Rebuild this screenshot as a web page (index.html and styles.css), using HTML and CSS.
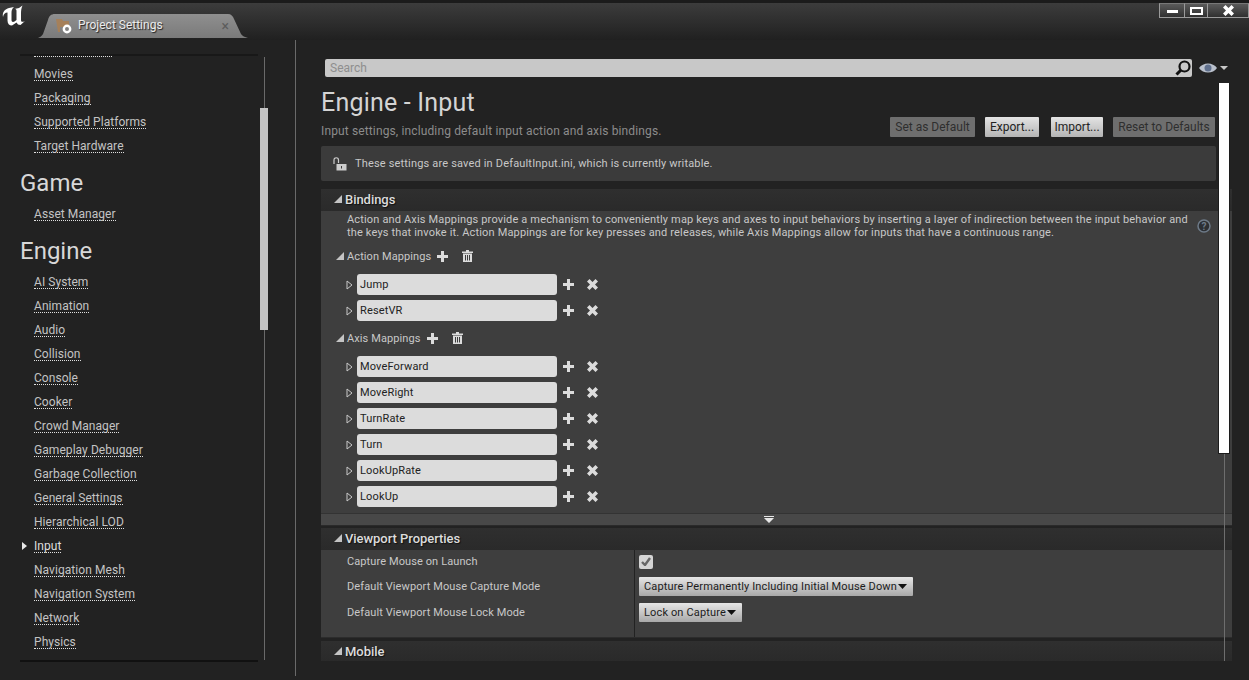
FILE: index.html
```html
<!DOCTYPE html>
<html lang="en">

<head>
    <meta charset="UTF-8">
    <title>Project Settings</title>
    <link rel="stylesheet" href="styles.css">
</head>

<body>
    <svg class="sprites" width="0" height="0">
        <symbol id="open" viewBox="0 0 8 8"><path d="M8 0V8H0Z" fill="#c4c4c4" /></symbol>
        <symbol id="closed" viewBox="0 0 7 10"><path d="M1 1L6 5L1 9Z" fill="none" stroke="#c8c8c8" /></symbol>
        <symbol id="plus" viewBox="0 0 11 11"><path d="M4 0H7V4H11V7H7V11H4V7H0V4H4Z" fill="#dcdcdc" /></symbol>
        <symbol id="cross" viewBox="0 0 11 11"><path d="M2.500 0L5.500 3L8.500 0L11 2.500L8 5.500L11 8.500L8.500 11L5.500 8L2.500 11L0 8.500L3 5.500L0 2.500Z" fill="currentColor" /></symbol>
        <symbol id="trash" viewBox="0 0 11 12"><path d="M0 1.500H4V0H7V1.500H11V3H0ZM1 3.500H10V12H1ZM3 5V10.500H4V5ZM5 5V10.500H6V5ZM7 5V10.500H8V5Z" fill="#dcdcdc" fill-rule="evenodd" /></symbol>
        <symbol id="caret" viewBox="0 0 9 5"><path d="M0 0H9L4.500 5Z" fill="#111" /></symbol>
    </svg>

    <div class="titlebar">
        <svg class="logo" width="26" height="28" viewBox="0 0 26 28">
            <path d="M3 17C2 12 5 9 9 8L14 7C12 9 11.500 10 11.500 13L11.500 20C11.500 22 13 22.500 14.500 21.500L16.500 20L16.500 11C16.500 9.500 16 9 14.500 9L19 8L22.500 5.500C21.500 8 21 10 21 13L21 20C21 22 22.500 22.500 25 21L20.500 25L18 24.500L16.500 22.500L12 25.500C9 25.500 7.500 23.500 7.500 20.500L7.500 12.500C5 12.500 3.500 14 3 17Z" fill="#fff" />
        </svg>
        <div class="tab">
            <svg class="tab-icon" width="17" height="16" viewBox="0 0 17 16">
                <path d="M0 1H6L7 3H13V9H4V14H2Z" fill="#a5805a" />
                <circle cx="11" cy="11" r="3.200" fill="none" stroke="#fff" stroke-width="2.400" />
            </svg>
            <span class="tab-title">Project Settings</span>
            <span class="tab-close">×</span>
        </div>
        <div class="window-btns">
            <div class="window-btn min"><i></i></div>
            <div class="window-btn max"><i></i></div>
            <div class="window-btn close">
                <svg width="11" height="11"><use href="#cross" /></svg>
            </div>
        </div>
    </div>

    <div class="main">
        <div class="sidebar">
            <div class="side-scroll">
                <div class="side-list">
                    <div class="side-item cut"><span></span></div>
                    <div class="side-item"><span>Movies</span></div>
                    <div class="side-item"><span>Packaging</span></div>
                    <div class="side-item"><span>Supported Platforms</span></div>
                    <div class="side-item"><span>Target Hardware</span></div>
                    <div class="side-head">Game</div>
                    <div class="side-item"><span>Asset Manager</span></div>
                    <div class="side-head">Engine</div>
                    <div class="side-item"><span>AI System</span></div>
                    <div class="side-item"><span>Animation</span></div>
                    <div class="side-item"><span>Audio</span></div>
                    <div class="side-item"><span>Collision</span></div>
                    <div class="side-item"><span>Console</span></div>
                    <div class="side-item"><span>Cooker</span></div>
                    <div class="side-item"><span>Crowd Manager</span></div>
                    <div class="side-item"><span>Gameplay Debugger</span></div>
                    <div class="side-item"><span>Garbage Collection</span></div>
                    <div class="side-item"><span>General Settings</span></div>
                    <div class="side-item"><span>Hierarchical LOD</span></div>
                    <div class="side-item active"><span>Input</span></div>
                    <div class="side-item"><span>Navigation Mesh</span></div>
                    <div class="side-item"><span>Navigation System</span></div>
                    <div class="side-item"><span>Network</span></div>
                    <div class="side-item"><span>Physics</span></div>
                </div>
            </div>
            <div class="side-track"><div class="side-thumb"></div></div>
        </div>

        <div class="content">
            <div class="search-row">
                <div class="search">
                    <span>Search</span>
                    <svg width="18" height="18" viewBox="0 0 18 18">
                        <circle cx="10.500" cy="7.500" r="5" fill="none" stroke="#111" stroke-width="2.200" />
                        <path d="M7 11L2.500 15.500" stroke="#111" stroke-width="3" />
                    </svg>
                </div>
                <svg class="eye" width="18" height="12" viewBox="0 0 18 12">
                    <path d="M0 6C4 0 14 0 18 6C14 12 4 12 0 6Z" fill="#b9c0cc" />
                    <circle cx="9" cy="6" r="3.500" fill="#5f6f8c" />
                </svg>
                <i class="eye-caret"></i>
            </div>

            <h1 class="page-title">Engine - Input</h1>
            <div class="page-actions">
                <p class="page-sub">Input settings, including default input action and axis bindings.</p>
                <button class="btn off btn-default">Set as Default</button>
                <button class="btn btn-export">Export...</button>
                <button class="btn btn-import">Import...</button>
                <button class="btn off btn-reset">Reset to Defaults</button>
            </div>

            <div class="notice">
                <svg width="14" height="14" viewBox="0 0 14 14">
                    <path d="M1 7V3C1 0 5.500 0 5.500 3V6" fill="none" stroke="#ccc" stroke-width="1.200" />
                    <path d="M3.500 7H13.500V13.500H3.500ZM8 9V11.500H9V9Z" fill="#ccc" fill-rule="evenodd" />
                </svg>
                <span>These settings are saved in DefaultInput.ini, which is currently writable.</span>
            </div>

            <div class="panel">
                <div class="sec-head"><svg width="8" height="8"><use href="#open" /></svg>Bindings</div>
                <div class="sec-body bindings">
                    <div class="desc">
                        <p>Action and Axis Mappings provide a mechanism to conveniently map keys and axes to input behaviors by inserting a layer of indirection between the input behavior and the keys that invoke it. Action Mappings are for key presses and releases, while Axis Mappings allow for inputs that have a continuous range.</p>
                        <svg class="help" width="14" height="14" viewBox="0 0 14 14">
                            <circle cx="7" cy="7" r="6" fill="#2c2f33" stroke="#6d7a88" stroke-width="1.500" />
                            <text x="7" y="10.500" text-anchor="middle" class="help-mark">?</text>
                        </svg>
                    </div>

                    <div class="map-head first">
                        <svg width="8" height="8"><use href="#open" /></svg>
                        <span>Action Mappings</span>
                        <svg class="ic-plus" width="11" height="11"><use href="#plus" /></svg>
                        <svg class="ic-trash" width="11" height="12"><use href="#trash" /></svg>
                    </div>
                    <div class="map-row">
                        <svg width="7" height="10"><use href="#closed" /></svg>
                        <div class="field">Jump</div>
                        <svg class="ic-plus" width="11" height="11"><use href="#plus" /></svg>
                        <svg class="ic-cross" width="11" height="11"><use href="#cross" /></svg>
                    </div>
                    <div class="map-row">
                        <svg width="7" height="10"><use href="#closed" /></svg>
                        <div class="field">ResetVR</div>
                        <svg class="ic-plus" width="11" height="11"><use href="#plus" /></svg>
                        <svg class="ic-cross" width="11" height="11"><use href="#cross" /></svg>
                    </div>

                    <div class="map-head">
                        <svg width="8" height="8"><use href="#open" /></svg>
                        <span>Axis Mappings</span>
                        <svg class="ic-plus" width="11" height="11"><use href="#plus" /></svg>
                        <svg class="ic-trash" width="11" height="12"><use href="#trash" /></svg>
                    </div>
                    <div class="map-row">
                        <svg width="7" height="10"><use href="#closed" /></svg>
                        <div class="field">MoveForward</div>
                        <svg class="ic-plus" width="11" height="11"><use href="#plus" /></svg>
                        <svg class="ic-cross" width="11" height="11"><use href="#cross" /></svg>
                    </div>
                    <div class="map-row">
                        <svg width="7" height="10"><use href="#closed" /></svg>
                        <div class="field">MoveRight</div>
                        <svg class="ic-plus" width="11" height="11"><use href="#plus" /></svg>
                        <svg class="ic-cross" width="11" height="11"><use href="#cross" /></svg>
                    </div>
                    <div class="map-row">
                        <svg width="7" height="10"><use href="#closed" /></svg>
                        <div class="field">TurnRate</div>
                        <svg class="ic-plus" width="11" height="11"><use href="#plus" /></svg>
                        <svg class="ic-cross" width="11" height="11"><use href="#cross" /></svg>
                    </div>
                    <div class="map-row">
                        <svg width="7" height="10"><use href="#closed" /></svg>
                        <div class="field">Turn</div>
                        <svg class="ic-plus" width="11" height="11"><use href="#plus" /></svg>
                        <svg class="ic-cross" width="11" height="11"><use href="#cross" /></svg>
                    </div>
                    <div class="map-row">
                        <svg width="7" height="10"><use href="#closed" /></svg>
                        <div class="field">LookUpRate</div>
                        <svg class="ic-plus" width="11" height="11"><use href="#plus" /></svg>
                        <svg class="ic-cross" width="11" height="11"><use href="#cross" /></svg>
                    </div>
                    <div class="map-row">
                        <svg width="7" height="10"><use href="#closed" /></svg>
                        <div class="field">LookUp</div>
                        <svg class="ic-plus" width="11" height="11"><use href="#plus" /></svg>
                        <svg class="ic-cross" width="11" height="11"><use href="#cross" /></svg>
                    </div>
                </div>
                <div class="expander">
                    <svg width="10" height="8" viewBox="0 0 10 8"><path d="M0 0H10V1H0ZM0 2H10L5 7Z" fill="#e6e6e6" /></svg>
                </div>

                <div class="sec-head viewport"><svg width="8" height="8"><use href="#open" /></svg>Viewport Properties</div>
                <div class="sec-body props">
                    <div class="prop-labels">
                        <div class="prop short">Capture Mouse on Launch</div>
                        <div class="prop">Default Viewport Mouse Capture Mode</div>
                        <div class="prop">Default Viewport Mouse Lock Mode</div>
                    </div>
                    <div class="prop-values">
                        <div class="prop short">
                            <div class="check">
                                <svg width="10" height="9" viewBox="0 0 10 9"><path d="M1 5L4 8L9 1" fill="none" stroke="#666" stroke-width="2.400" /></svg>
                            </div>
                        </div>
                        <div class="prop">
                            <div class="combo">Capture Permanently Including Initial Mouse Down<svg width="9" height="5"><use href="#caret" /></svg></div>
                        </div>
                        <div class="prop">
                            <div class="combo">Lock on Capture<svg width="9" height="5"><use href="#caret" /></svg></div>
                        </div>
                    </div>
                </div>

                <div class="sec-head mobile"><svg width="8" height="8"><use href="#open" /></svg>Mobile</div>
            </div>

            <div class="content-track"><div class="content-thumb"></div></div>
        </div>
    </div>
</body>

</html>
```

FILE: styles.css
```css
* {
    box-sizing: border-box;
}

html,
body {
    margin: 0;
    height: 680px;
    overflow: hidden;
}

body {
    background: #222222;
    color: #c8c8c8;
    font-family: Roboto, "Liberation Sans", sans-serif;
    font-size: 12px;
}

p {
    margin: 0;
}

.sprites {
    position: absolute;
}

/* title bar */
.titlebar {
    display: flex;
    height: 40px;
    border-top: 3px solid #1b1b1b;
    background: linear-gradient(#3c3c3c, #202020);
}

.logo {
    margin-top: -3px;
    flex: none;
}

.tab {
    display: flex;
    align-items: center;
    flex: none;
    width: 210px;
    height: 24px;
    margin-top: 11px;
    margin-left: 12px;
    padding-left: 18px;
    background: linear-gradient(#8f8f8f, #7a7a7a);
    clip-path: path("M0 24C2 23 4 22 5 20L10 6C11 2 13 0 17 0H190C193 0 195 2 196 5L203 20C204 22 207 23 210 24Z");
}

.tab-title {
    margin-left: 5px;
    margin-top: -2px;
    color: #ececec;
    text-shadow: 1px 1px 1px #222;
}

.tab-close {
    margin-left: auto;
    margin-right: 19px;
    font-size: 14px;
    color: #5c5c5c;
}

.window-btns {
    display: flex;
    margin-left: auto;
    height: 15px;
}

.window-btn {
    display: flex;
    align-items: center;
    justify-content: center;
    height: 15px;
    border: 1px solid #9a9a9a;
    border-top-color: #777;
    background: linear-gradient(#5a5a5a, #303030);
}

.window-btn.min {
    width: 26px;
}

.window-btn.max {
    width: 23px;
    border-left: none;
}

.window-btn.close {
    width: 41px;
    border-left: none;
    color: #fff;
}

.min i {
    width: 11px;
    height: 3px;
    margin-top: 2px;
    background: #fff;
}

.max i {
    width: 13px;
    height: 8px;
    border: 2px solid #fff;
}

.close svg {
    display: block;
}

/* layout */
.main {
    display: flex;
    height: 636px;
}

/* left category list */
.sidebar {
    position: relative;
    flex: none;
    width: 296px;
    border-right: 1px solid #6a6a6a;
    padding-top: 14px;
}

.side-scroll {
    width: 238px;
    height: 608px;
    margin-left: 20px;
    overflow: hidden;
    border-top: 2px solid #181818;
    border-bottom: 2px solid #111;
}

.side-list {
    margin-top: -18px;
}

.side-item {
    position: relative;
    height: 24px;
    padding-left: 14px;
    font-size: 12px;
    letter-spacing: 0.06px;
    color: #c4c4c4;
}

.side-item span {
    display: inline-block;
    height: 16px;
    line-height: 19px;
    margin-top: 3px;
    border-bottom: 1px dotted #e0e0e0;
    vertical-align: top;
}

.side-item.cut span {
    width: 78px;
}

.side-item.active {
    color: #dedede;
}

.side-item.active::before {
    content: "";
    position: absolute;
    left: 2px;
    top: 8px;
    border-left: 5px solid #e8e8e8;
    border-top: 4px solid transparent;
    border-bottom: 4px solid transparent;
}

.side-head {
    height: 44px;
    line-height: 50px;
    font-size: 24px;
    color: #d8d8d8;
}

.side-track {
    position: absolute;
    left: 264px;
    top: 17px;
    bottom: 16px;
    width: 1px;
    background: #6a6a6a;
}

.side-thumb {
    position: absolute;
    left: -4px;
    top: 51px;
    width: 8px;
    height: 222px;
    background: #c4c4c4;
}

/* right settings pane */
.content {
    position: relative;
    flex: 1;
    min-width: 0;
    height: 621px;
    padding-left: 25px;
    overflow: hidden;
}

.search-row {
    display: flex;
    align-items: center;
    height: 18px;
    margin-top: 19px;
    margin-left: 4px;
}

.search {
    display: flex;
    align-items: center;
    justify-content: space-between;
    width: 867px;
    height: 18px;
    padding-left: 5px;
    background: #c8c8c8;
    border-radius: 2px;
    color: #8e8e8e;
}

.eye {
    margin-left: 7px;
}

.eye-caret {
    margin-left: 3px;
    border-top: 4px solid #c8c8c8;
    border-left: 4px solid transparent;
    border-right: 4px solid transparent;
}

.page-title {
    height: 30px;
    margin: 10px 0 0;
    font-size: 25px;
    font-weight: 400;
    letter-spacing: 0.2px;
    line-height: 32px;
    color: #d4d4d4;
}

.page-actions {
    display: flex;
    height: 20px;
    width: 894px;
}

.page-sub {
    width: 569px;
    padding-top: 6px;
    color: #8c8c8c;
    font-size: 12px;
    letter-spacing: 0.13px;
    line-height: 16px;
}

.btn {
    height: 20px;
    padding: 0;
    border: none;
    border-radius: 1px;
    background: linear-gradient(#e4e4e4, #b4b4b4);
    color: #222;
    font-family: inherit;
    font-size: 12px;
}

.btn.off {
    background: #6e6e6e;
    color: #2e2e2e;
}

.btn-default {
    width: 85px;
}

.btn-export {
    width: 54px;
    margin-left: 10px;
}

.btn-import {
    width: 52px;
    margin-left: 12px;
}

.btn-reset {
    width: 102px;
    margin-left: 10px;
}

.notice {
    display: flex;
    align-items: center;
    gap: 8px;
    width: 895px;
    height: 35px;
    margin-top: 9px;
    padding-left: 12px;
    background: #3b3b3b;
    border-radius: 2px;
    font-size: 11px;
    letter-spacing: 0.17px;
}

.panel {
    width: 911px;
    margin-top: 8px;
}

.sec-head {
    display: flex;
    align-items: center;
    gap: 3px;
    height: 22px;
    padding-left: 13px;
    padding-bottom: 2px;
    background: linear-gradient(#2f2f2f, #2a2a2a);
    font-size: 13px;
    font-weight: 500;
    letter-spacing: -0.05px;
    color: #dcdcdc;
    text-shadow: 1px 1px 1px #111;
}

.sec-head.viewport {
    margin-top: 2px;
}

.sec-head.mobile {
    height: 20px;
    margin-top: 3px;
    padding-bottom: 0;
}

.sec-body {
    background: #3e3e3e;
}

.bindings {
    padding: 2px 0 1px;
}

.desc {
    display: flex;
    justify-content: space-between;
    align-items: center;
    padding-left: 26px;
    padding-right: 21px;
    font-size: 11px;
    line-height: 13px;
    letter-spacing: 0.16px;
}

.desc p {
    width: 848px;
}

.help-mark {
    font-size: 10px;
    font-weight: 700;
    fill: #6d7a88;
}

.map-head {
    display: flex;
    align-items: center;
    height: 18px;
    margin-top: 8px;
    padding-left: 15px;
    font-size: 11px;
    letter-spacing: 0.1px;
}

.map-head span {
    margin-left: 3px;
}

.map-head .ic-plus {
    margin-left: 6px;
}

.map-head .ic-trash {
    margin-left: 14px;
}

.map-row {
    display: flex;
    align-items: center;
    height: 21px;
    margin-bottom: 5px;
    padding-left: 25px;
    color: #dcdcdc;
}

.map-head + .map-row {
    margin-top: 9px;
}

.field {
    width: 200px;
    height: 21px;
    margin-left: 4px;
    padding-left: 3px;
    border-radius: 3px;
    background: #dcdcdc;
    color: #222;
    font-size: 11px;
    line-height: 21px;
    letter-spacing: 0.15px;
}

.map-row .ic-plus {
    margin-left: 6px;
    margin-top: -1px;
}

.map-row .ic-cross {
    margin-left: 13px;
    margin-top: -1px;
}

.expander {
    display: flex;
    justify-content: center;
    align-items: center;
    height: 13px;
    padding-right: 15px;
    background: #484848;
    border-top: 1px solid #333;
    border-bottom: 1px solid #2a2a2a;
}

.props {
    display: flex;
    height: 88px;
    border-bottom: 1px solid #2c2c2c;
}

.prop-labels {
    width: 313px;
    padding-left: 26px;
    font-size: 11px;
    letter-spacing: 0.1px;
}

.prop-values {
    flex: 1;
    padding-left: 4px;
    border-left: 1px solid #222;
}

.prop {
    display: flex;
    align-items: center;
    height: 26px;
}

.prop.short {
    height: 23px;
}

.check {
    display: flex;
    align-items: center;
    justify-content: center;
    width: 14px;
    height: 14px;
    border-radius: 2px;
    background: #d4d4d4;
}

.combo {
    display: flex;
    align-items: center;
    gap: 1px;
    height: 19px;
    padding: 0 6px 0 5px;
    border-radius: 1px;
    background: linear-gradient(#e6e6e6, #a8a8a8);
    color: #1c1c1c;
    font-size: 11px;
    letter-spacing: 0.14px;
}

.content-track {
    position: absolute;
    left: 928px;
    top: 43px;
    bottom: 0;
    width: 1px;
    background: #6e6e6e;
}

.content-thumb {
    position: absolute;
    left: -6px;
    top: 0;
    width: 12px;
    height: 371px;
    background: #fff;
    border: 1px solid #1c1c1c;
    border-top: none;
}
```
